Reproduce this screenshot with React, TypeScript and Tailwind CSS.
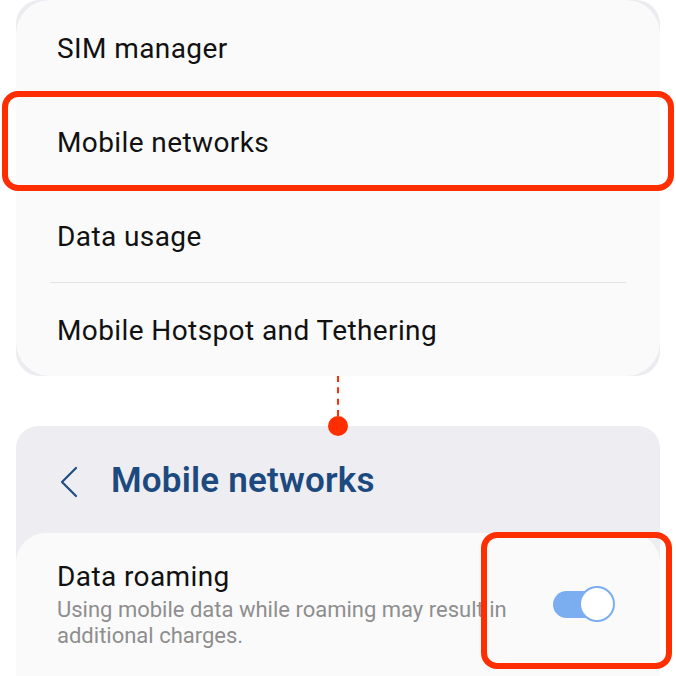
import React from 'react';

const rows = ['SIM manager', 'Mobile networks', 'Data usage'];

function Toggle() {
  return (
    <div className="relative w-[62px] h-[36px] flex items-center">
      <div className="w-[50px] h-[27px] rounded-full bg-[#7aaef0]" />
      <div className="absolute right-0 top-0 w-[36px] h-[36px] rounded-full bg-white border-2 border-[#7aaef0]" />
    </div>
  );
}

export default function App() {
  return (
    <div
      className="relative w-[676px] h-[676px] overflow-hidden bg-white"
      style={{ fontFamily: 'Roboto, "Noto Sans", sans-serif' }}
    >
      {/* connections list */}
      <div className="mx-[16px] rounded-[24px] bg-[#ececf0]">
        <div className="rounded-[34px] bg-[#fafafb] h-[376px] flex flex-col">
          {rows.map((r) => (
            <div key={r} className="h-[94px] flex items-center pl-[41px] pt-[4px]">
              <span className="text-[28px] text-[#111] tracking-[0.4px]">{r}</span>
            </div>
          ))}
          <div className="mx-[34px] h-px bg-[#e3e3e6]" />
          <div className="h-[93px] flex items-center pl-[41px] pt-[2px]">
            <span className="text-[28px] text-[#111] tracking-[0.4px]">
              Mobile Hotspot and Tethering
            </span>
          </div>
        </div>
      </div>

      {/* connector */}
      <div className="h-[50px] flex justify-center">
        <div className="w-[2px] h-[40px] border-l-2 border-dashed border-[#ff2e00]" />
      </div>

      {/* mobile networks screen */}
      <div className="mx-[16px] rounded-t-[22px] bg-[#eeeef2] h-[260px] flex flex-col">
        <div className="h-[107px] flex items-center pl-[44px] gap-[33px] pt-[4px]">
          <svg width="18" height="32" viewBox="0 0 18 32" fill="none">
            <polyline
              points="16,2 2,16 16,30"
              stroke="#1f4c80"
              strokeWidth="2.2"
              strokeLinecap="round"
              strokeLinejoin="round"
            />
          </svg>
          <span className="text-[35px] font-semibold text-[#1c4a7e] tracking-[0.2px]">
            Mobile networks
          </span>
        </div>
        <div className="flex-1 rounded-t-[30px] bg-[#fafafb] flex items-start pt-[28px] pl-[41px] pr-[45px]">
          <div className="flex-1 min-w-0 pr-[20px]">
            <div className="text-[28px] text-[#111] leading-[32px] tracking-[0.4px]">
              Data roaming
            </div>
            <div className="mt-[4px] text-[22px] leading-[26px] text-[#8e8e8e]">
              Using mobile data while roaming may result in additional charges.
            </div>
          </div>
          <div className="mt-[25px]">
            <Toggle />
          </div>
        </div>
      </div>

      {/* highlights */}
      <div className="absolute left-[2px] top-[91px] w-[672px] h-[100px] rounded-[16px] border-[6px] border-[#ff2e00]" />
      <div className="absolute left-[328px] top-[416px] w-[20px] h-[20px] rounded-full bg-[#ff2e00]" />
      <div className="absolute left-[481px] top-[532px] w-[191px] h-[137px] rounded-[16px] border-[6px] border-[#ff2e00]" />
    </div>
  );
}
